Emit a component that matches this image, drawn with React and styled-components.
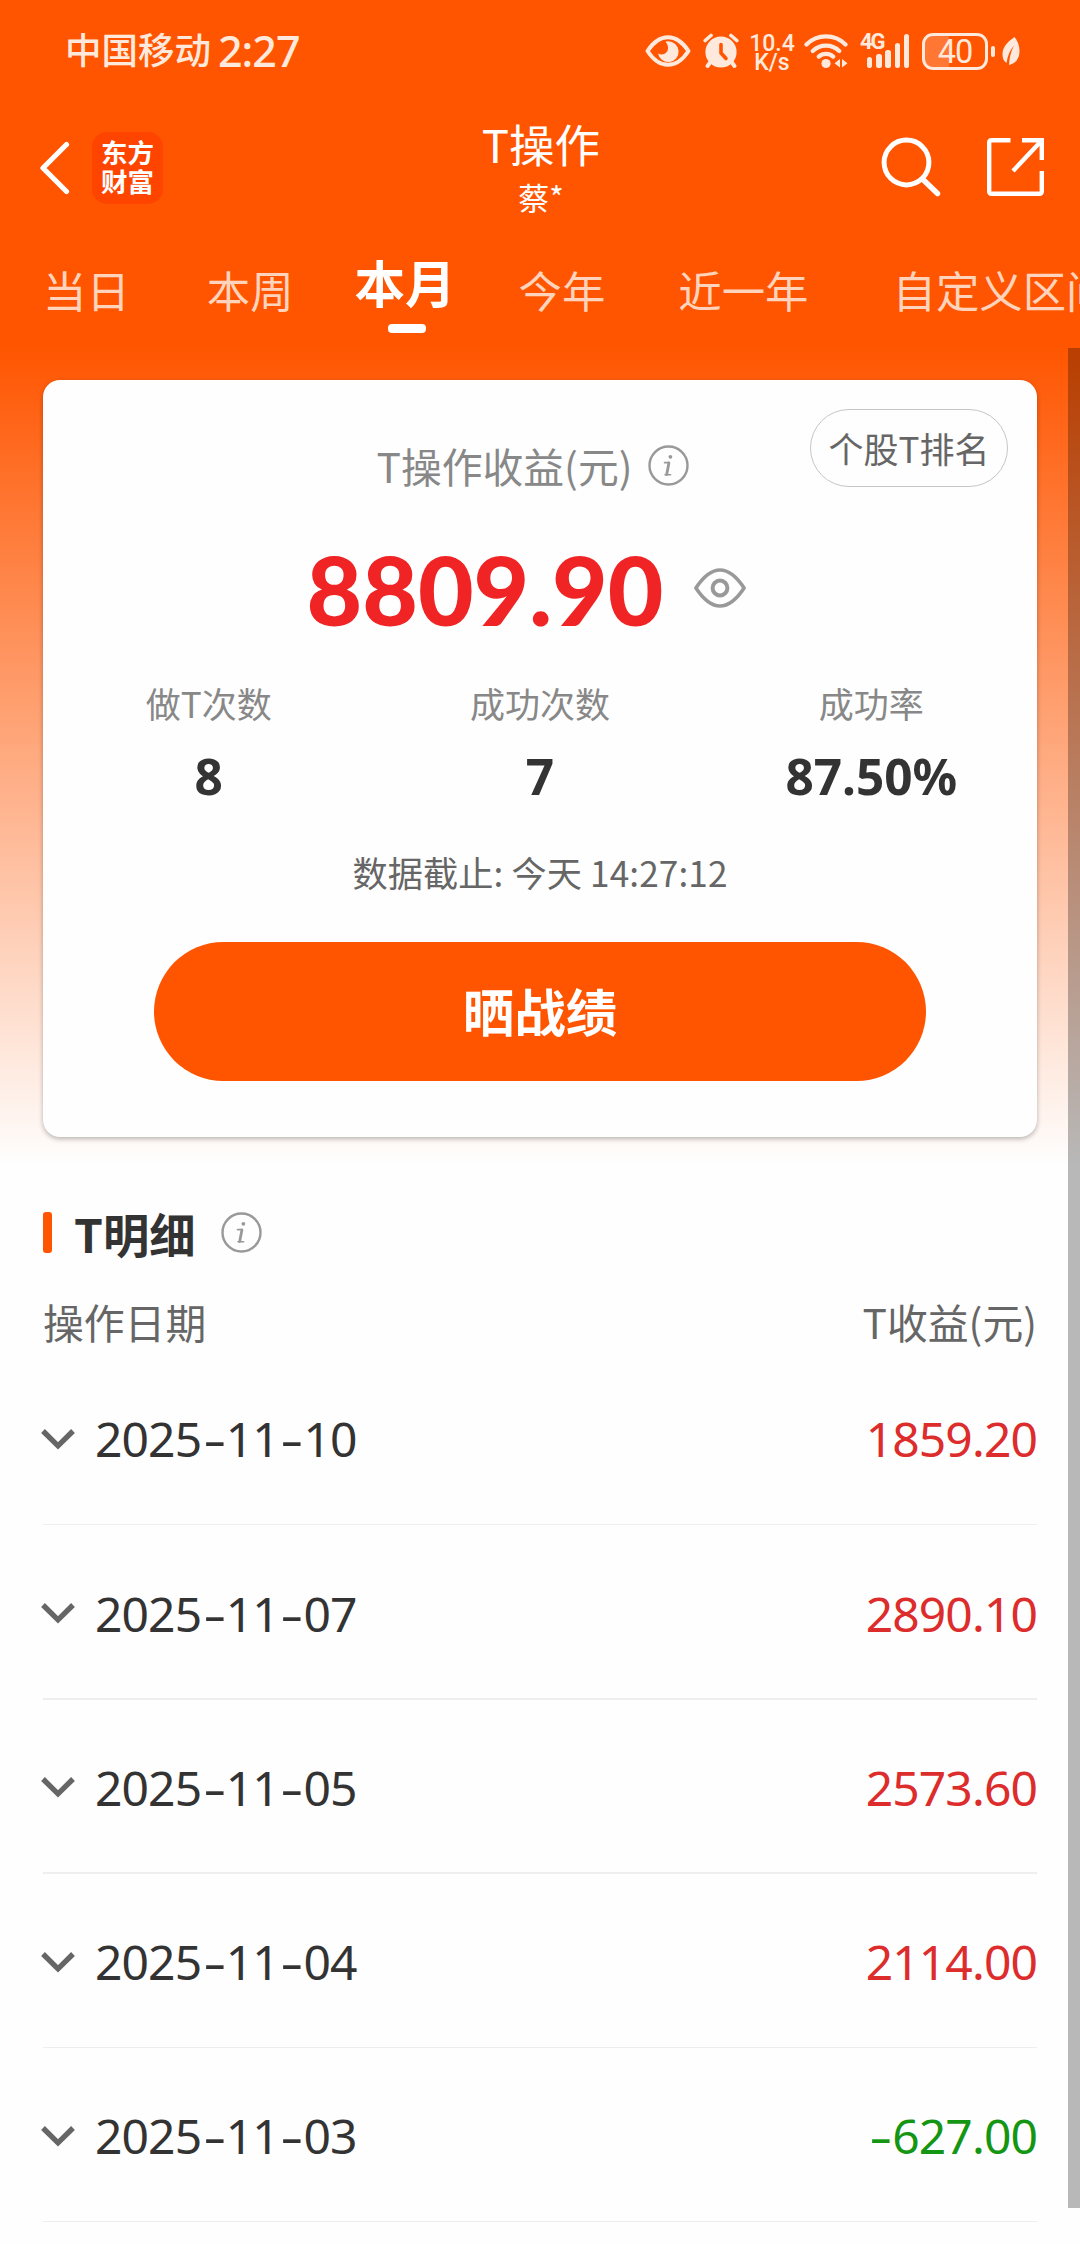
import React from 'react';
import styled, { createGlobalStyle, ThemeProvider } from 'styled-components';

const theme = {
  colors: {
    brand: '#ff5500',
    logo: '#ff4400',
    status: '#ffe9dd',
    tab: '#ffd3bc',
    title: '#333333',
    text: '#666666',
    label: '#888888',
    icon: '#999999',
    border: '#c6c6c6',
    divider: '#eeeeee',
    profit: '#f02424',
    gain: '#dd2c2c',
    loss: '#149614',
  },
  fonts: {
    text: '"Noto Sans CJK SC", "Noto Sans", sans-serif',
    number: '"Noto Sans", "Noto Sans CJK SC", sans-serif',
    display: 'Lato, "Noto Sans", sans-serif',
  },
};

const GlobalStyle = createGlobalStyle`
  * {
    box-sizing: border-box;
  }
  body {
    margin: 0;
    background: #fefefe;
  }
  svg {
    display: block;
    flex: none;
  }
`;

const Page = styled.div`
  position: relative;
  width: 1080px;
  height: 2244px;
  overflow: hidden;
  font-family: ${props => props.theme.fonts.text};
  color: ${props => props.theme.colors.title};
  background: linear-gradient(
    to bottom,
    ${props => props.theme.colors.brand} 345px,
    #fefefe 1165px
  );
`;

const StatusBar = styled.div`
  display: flex;
  align-items: center;
  height: 102px;
  padding: 0 60px 0 65px;
  color: ${props => props.theme.colors.status};
`;

const Carrier = styled.span`
  font-size: 36.5px;
  font-weight: 500;
  line-height: 50px;
  margin-top: -4px;
`;

const Clock = styled.span`
  flex: 1;
  margin-left: 7px;
  font-family: ${props => props.theme.fonts.number};
  font-size: 43px;
  font-weight: 500;
  letter-spacing: -1px;
  line-height: 50px;
`;

const StatusIcons = styled.div`
  display: flex;
  align-items: center;
`;

const NetSpeed = styled.div`
  width: 46px;
  margin: 3px 9px 0 10px;
  font-family: Roboto, sans-serif;
  font-size: 23px;
  font-weight: 500;
  line-height: 19px;
  text-align: center;
`;

const Header = styled.header`
  display: grid;
  grid-template-columns: 1fr auto 1fr;
  height: 132px;
  padding: 0 36px 0 39px;
  color: #fff;
`;

const HeaderLeft = styled.div`
  display: flex;
  align-items: center;
  gap: 21px;
  padding-bottom: 1px;
`;

const Logo = styled.div`
  width: 71px;
  height: 72px;
  padding-top: 5px;
  border-radius: 15px;
  background: ${props => props.theme.colors.logo};
  font-size: 26.5px;
  font-weight: 700;
  line-height: 29.5px;
  text-align: center;
`;

const HeaderTitle = styled.div`
  padding-right: 1px;
  text-align: center;
`;

const Title = styled.div`
  margin-top: 8px;
  font-size: 45.5px;
  line-height: 66px;
`;

const Account = styled.div`
  font-size: 31px;
  line-height: 42px;
`;

const HeaderActions = styled.div`
  display: flex;
  align-items: center;
  justify-content: flex-end;
  gap: 46px;
  padding-bottom: 2px;
`;

const Tabs = styled.nav`
  display: flex;
  height: 146px;
  padding-left: 43px;
  white-space: nowrap;
`;

const Tab = styled.div`
  flex: none;
  display: flex;
  flex-direction: column;
  align-items: center;
  margin-left: ${props => props.$gap || 0}px;
  padding-top: ${props => (props.$active ? 15 : 23)}px;
  color: ${props => (props.$active ? '#fff' : props.theme.colors.tab)};
  font-size: ${props => (props.$active ? 50.5 : 43.4)}px;
  font-weight: ${props => (props.$active ? 700 : 400)};
  line-height: 64px;
`;

const TabMark = styled.i`
  width: 38px;
  height: 9px;
  margin-top: 11px;
  margin-left: 3px;
  border-radius: 4px;
  background: #fff;
`;

const Card = styled.section`
  position: relative;
  height: 757px;
  margin: 0 43px;
  padding-top: 52px;
  border-radius: 17px;
  background: #fefefe;
  box-shadow: 0 2px 5px rgba(0, 0, 0, 0.28);
`;

const RankButton = styled.button`
  position: absolute;
  top: 29px;
  right: 29px;
  width: 198px;
  height: 78px;
  padding: 0 0 2px;
  border: 1px solid ${props => props.theme.colors.border};
  border-radius: 39px;
  background: none;
  color: ${props => props.theme.colors.text};
  font-family: inherit;
  font-size: 35px;
`;

const ProfitTitle = styled.div`
  display: flex;
  align-items: center;
  justify-content: center;
  gap: 15px;
  height: 66px;
  padding-right: 15px;
  color: ${props => props.theme.colors.label};
  font-size: 40.8px;
`;

const Profit = styled.div`
  display: flex;
  align-items: center;
  justify-content: center;
  gap: 31px;
  height: 179px;
  padding-right: 27px;
`;

const ProfitValue = styled.span`
  margin-top: 3px;
  color: ${props => props.theme.colors.profit};
  font-family: ${props => props.theme.fonts.display};
  font-size: 96px;
  font-weight: 900;
  line-height: 116px;
`;

const Stats = styled.div`
  display: grid;
  grid-template-columns: repeat(3, 1fr);
  text-align: center;
`;

const StatLabel = styled.div`
  color: ${props => props.theme.colors.label};
  font-size: 35px;
  line-height: 52px;
`;

const StatValue = styled.div`
  margin-top: 15px;
  font-family: ${props => props.theme.fonts.number};
  font-size: 49.5px;
  font-weight: 700;
  line-height: 64px;
`;

const Deadline = styled.div`
  margin-top: 38px;
  color: ${props => props.theme.colors.text};
  font-size: 35.2px;
  letter-spacing: 0.1px;
  line-height: 52px;
  text-align: center;
`;

const ShareButton = styled.button`
  display: block;
  width: 772px;
  height: 139px;
  margin: 44px auto 0;
  padding: 0 0 5px;
  border: none;
  border-radius: 70px;
  background: ${props => props.theme.colors.brand};
  color: #fff;
  font-family: inherit;
  font-size: 51.5px;
  font-weight: 700;
`;

const Detail = styled.section`
  padding: 61px 43px 0;
`;

const DetailTitle = styled.h2`
  display: flex;
  align-items: center;
  height: 68px;
  margin: 0;
  font-size: 46.3px;
  font-weight: 700;
`;

const TitleBar = styled.i`
  width: 9px;
  height: 41px;
  margin-right: 22px;
  border-radius: 3px;
  background: ${props => props.theme.colors.brand};
`;

const TitleText = styled.span`
  margin-right: 25px;
`;

const TableHead = styled.div`
  display: flex;
  justify-content: space-between;
  height: 85px;
  padding-top: 26px;
  color: ${props => props.theme.colors.text};
  font-size: 40.8px;
  line-height: 60px;
`;

const Row = styled.div`
  display: flex;
  align-items: center;
  height: 172.75px;
  padding-top: 4px;
  font-family: ${props => props.theme.fonts.number};
  font-size: 48px;
  letter-spacing: -0.9px;
  line-height: 64px;
`;

const Divider = styled.div`
  height: 1.5px;
  background: ${props => props.theme.colors.divider};
`;

const RowDate = styled.span`
  flex: 1;
  margin-left: 20px;
`;

const RowAmount = styled.span`
  color: ${props => (props.$loss ? props.theme.colors.loss : props.theme.colors.gain)};
`;

const Dash = styled.span`
  display: inline-block;
  margin: 0 4.5px 0 5.5px;
  transform: scaleX(1.5);
`;

const ScrollThumb = styled.div`
  position: absolute;
  top: 348px;
  right: 0;
  width: 12px;
  height: 1860px;
  background: rgba(0, 0, 0, 0.275);
`;

const InfoIcon = () => (
  <svg width='41' height='41' viewBox='0 0 41 41' fill='none' stroke='#999' strokeLinecap='round'>
    <circle cx='20.5' cy='20.5' r='19' strokeWidth='2.4' />
    <circle cx='22.4' cy='11.8' r='1.9' fill='#999' stroke='none' />
    <path d='M16.5 17.6h4.2M17 29.8h5.6' strokeWidth='1.6' />
    <path d='M20.9 18l-2.2 11.500' strokeWidth='2.8' />
  </svg>
);

const VisibleIcon = () => (
  <svg width='52' height='40' viewBox='0 0 52 40' fill='none' stroke='#999' strokeWidth='3.6'>
    <path
      d='M1.9 20C8.5 10 16 2 26 2s17.5 8 24.1 18C43.5 30 36 38 26 38S8.5 30 1.9 20z'
      strokeLinejoin='round'
    />
    <circle cx='26' cy='20' r='7.4' strokeWidth='4' />
  </svg>
);

const ChevronSvg = styled.svg`
  margin-left: -2px;
`;

const ChevronIcon = () => (
  <ChevronSvg width='34' height='21' viewBox='0 0 34 21' fill='none' stroke='#666' strokeWidth='5.4'>
    <path d='M2 2L17 16.8L32 2' />
  </ChevronSvg>
);

const BackIcon = () => (
  <svg width='32' height='54' viewBox='0 0 32 54' fill='none' stroke='#fff' strokeWidth='5.2'>
    <path d='M27.500 3.500L4 27L27.500 50.500' strokeLinecap='round' strokeLinejoin='round' />
  </svg>
);

const SearchIcon = () => (
  <svg width='60' height='60' viewBox='0 0 60 60' fill='none' stroke='#fff' strokeWidth='5'>
    <circle cx='25.5' cy='25.5' r='22.400' />
    <path d='M42 42.5L56.5 56.5' strokeLinecap='round' strokeWidth='5.4' />
  </svg>
);

const ExportIcon = () => (
  <svg width='57' height='58' viewBox='0 0 57 58' fill='none' stroke='#fff' strokeWidth='4.400'>
    <path d='M23.5 2.2H4.200a2 2 0 0 0-2 2v49.600a2 2 0 0 0 2 2h48.600a2 2 0 0 0 2-2V33' />
    <path d='M35 2.200h19.800V22M54.500 2.800L26 33' />
  </svg>
);

const StatusEyeIcon = () => (
  <svg width='46' height='32' viewBox='0 0 46 32'>
    <path
      d='M2.500 16C8 7.500 14.500 2.200 23 2.200S38 7.500 43.500 16C38 24.500 31.500 29.800 23 29.800S8 24.500 2.500 16z'
      fill='none'
      stroke='#ffe9dd'
      strokeWidth='4'
      strokeLinejoin='round'
    />
    <path
      d='M23 6.200a10.400 10.400 0 1 1-10 12.300c5 2.500 9.500-.5 10-4.500.4-3-.8-5.500-2.500-7.300z'
      fill='#ffe9dd'
    />
  </svg>
);

const AlarmIcon = () => (
  <svg width='36' height='36' viewBox='0 0 36 36' stroke='#ffe9dd' strokeLinecap='round'>
    <circle cx='18' cy='19' r='15.6' fill='#ffe9dd' stroke='none' />
    <path d='M2.200 7.500L8 2.500M33.800 7.500L28 2.500' strokeWidth='3.6' />
    <path d='M7.500 29L4.500 33M28.500 29L31.500 33' strokeWidth='4' />
    <path d='M18 11.500v8.500l5 5.500' stroke='#ff5500' strokeWidth='3.6' fill='none' />
  </svg>
);

const WifiIcon = () => (
  <svg width='46' height='36' viewBox='0 0 46 36' fill='none' stroke='#ffe9dd' strokeLinecap='round'>
    <path
      d='M2.500 11.500a27.500 27.500 0 0 1 39 0M8.800 18a19 19 0 0 1 26.400 0M14.800 23.600a11 11 0 0 1 14.400 0'
      strokeWidth='4.2'
    />
    <circle cx='22' cy='30.5' r='4.6' fill='#ffe9dd' stroke='none' />
    <path d='M36 26v8.500l-5.500-4.200zM38 26v8.500l5.500-4.200z' fill='#ffe9dd' stroke='none' />
  </svg>
);

const SignalWrapper = styled.div`
  position: relative;
  width: 50px;
  height: 36px;
  margin: 0 12px 0 10px;
`;

const SignalLabel = styled.span`
  position: absolute;
  top: -2px;
  left: 0;
  font-family: Roboto, sans-serif;
  font-size: 22px;
  font-weight: 700;
  line-height: 22px;
  letter-spacing: -2px;
`;

const Bars = styled.div`
  display: flex;
  align-items: flex-end;
  gap: 3.8px;
  height: 35px;
  padding-left: 7px;
`;

const Bar = styled.i`
  width: 5.4px;
  height: ${props => props.$size}px;
  border-radius: 2.5px;
  background: ${props => props.theme.colors.status};
`;

const Battery = styled.div`
  width: 66px;
  height: 37px;
  border: 3px solid ${props => props.theme.colors.status};
  border-radius: 11px;
  background: linear-gradient(to right, #ff7733 40%, transparent 40%);
  font-family: Roboto, sans-serif;
  font-size: 32.5px;
  letter-spacing: -1px;
  line-height: 32px;
  text-align: center;
`;

const BatteryCap = styled.i`
  width: 4px;
  height: 11px;
  margin: 0 7px 0 3px;
  border-radius: 2px;
  background: ${props => props.theme.colors.status};
`;

const LeafIcon = () => (
  <svg width='18' height='30' viewBox='0 0 18 30'>
    <path
      d='M12.500 1C4 7 .5 12 .5 18.500c0 4 1.500 7 4 8.500C5.500 20 8 14 12 9.500 9 15.500 7.300 21.500 7 29c7-1.500 10.500-7 10.500-14C17.500 9.500 15.500 4.500 12.500 1z'
      fill='#ffe9dd'
    />
  </svg>
);

const StatusGap = styled.span`
  width: 12px;
`;

// widens the hyphen so it sits like a tabular dash between digits
const Figures = ({ value }) =>
  value.split(/(-)/).map((part, i) => (part === '-' ? <Dash key={i}>-</Dash> : part));

const tabs = [
  { label: '当日' },
  { label: '本周', gap: 77 },
  { label: '本月', gap: 61, active: true },
  { label: '今年', gap: 63 },
  { label: '近一年', gap: 73 },
  { label: '自定义区间', gap: 84 },
];

const stats = [
  { label: '做T次数', value: '8' },
  { label: '成功次数', value: '7' },
  { label: '成功率', value: '87.50%' },
];

const records = [
  { date: '2025-11-10', amount: '1859.20' },
  { date: '2025-11-07', amount: '2890.10' },
  { date: '2025-11-05', amount: '2573.60' },
  { date: '2025-11-04', amount: '2114.00' },
  { date: '2025-11-03', amount: '-627.00' },
];

const App = () => (
  <ThemeProvider theme={theme}>
    <GlobalStyle />
    <Page>
      <StatusBar>
        <Carrier>中国移动</Carrier>
        <Clock>2:27</Clock>
        <StatusIcons>
          <StatusEyeIcon />
          <StatusGap />
          <AlarmIcon />
          <NetSpeed>
            10.4
            <br />
            K/s
          </NetSpeed>
          <WifiIcon />
          <SignalWrapper>
            <SignalLabel>4G</SignalLabel>
            <Bars>
              {[11, 14, 18, 25, 34].map(size => (
                <Bar key={size} $size={size} />
              ))}
            </Bars>
          </SignalWrapper>
          <Battery>40</Battery>
          <BatteryCap />
          <LeafIcon />
        </StatusIcons>
      </StatusBar>
      <Header>
        <HeaderLeft>
          <BackIcon />
          <Logo>
            东方
            <br />
            财富
          </Logo>
        </HeaderLeft>
        <HeaderTitle>
          <Title>T操作</Title>
          <Account>蔡*</Account>
        </HeaderTitle>
        <HeaderActions>
          <SearchIcon />
          <ExportIcon />
        </HeaderActions>
      </Header>
      <Tabs>
        {tabs.map(({ label, gap, active }) => (
          <Tab key={label} $gap={gap} $active={active}>
            {label}
            {active && <TabMark />}
          </Tab>
        ))}
      </Tabs>
      <Card>
        <RankButton>个股T排名</RankButton>
        <ProfitTitle>
          T操作收益(元)
          <InfoIcon />
        </ProfitTitle>
        <Profit>
          <ProfitValue>8809.90</ProfitValue>
          <VisibleIcon />
        </Profit>
        <Stats>
          {stats.map(({ label, value }) => (
            <div key={label}>
              <StatLabel>{label}</StatLabel>
              <StatValue>{value}</StatValue>
            </div>
          ))}
        </Stats>
        <Deadline>数据截止: 今天 14:27:12</Deadline>
        <ShareButton>晒战绩</ShareButton>
      </Card>
      <Detail>
        <DetailTitle>
          <TitleBar />
          <TitleText>T明细</TitleText>
          <InfoIcon />
        </DetailTitle>
        <TableHead>
          <span>操作日期</span>
          <span>T收益(元)</span>
        </TableHead>
        {records.map(({ date, amount }) => (
          <React.Fragment key={date}>
            <Row>
              <ChevronIcon />
              <RowDate>
                <Figures value={date} />
              </RowDate>
              <RowAmount $loss={amount.startsWith('-')}>
                <Figures value={amount} />
              </RowAmount>
            </Row>
            <Divider />
          </React.Fragment>
        ))}
      </Detail>
      <ScrollThumb />
    </Page>
  </ThemeProvider>
);

export default App;
